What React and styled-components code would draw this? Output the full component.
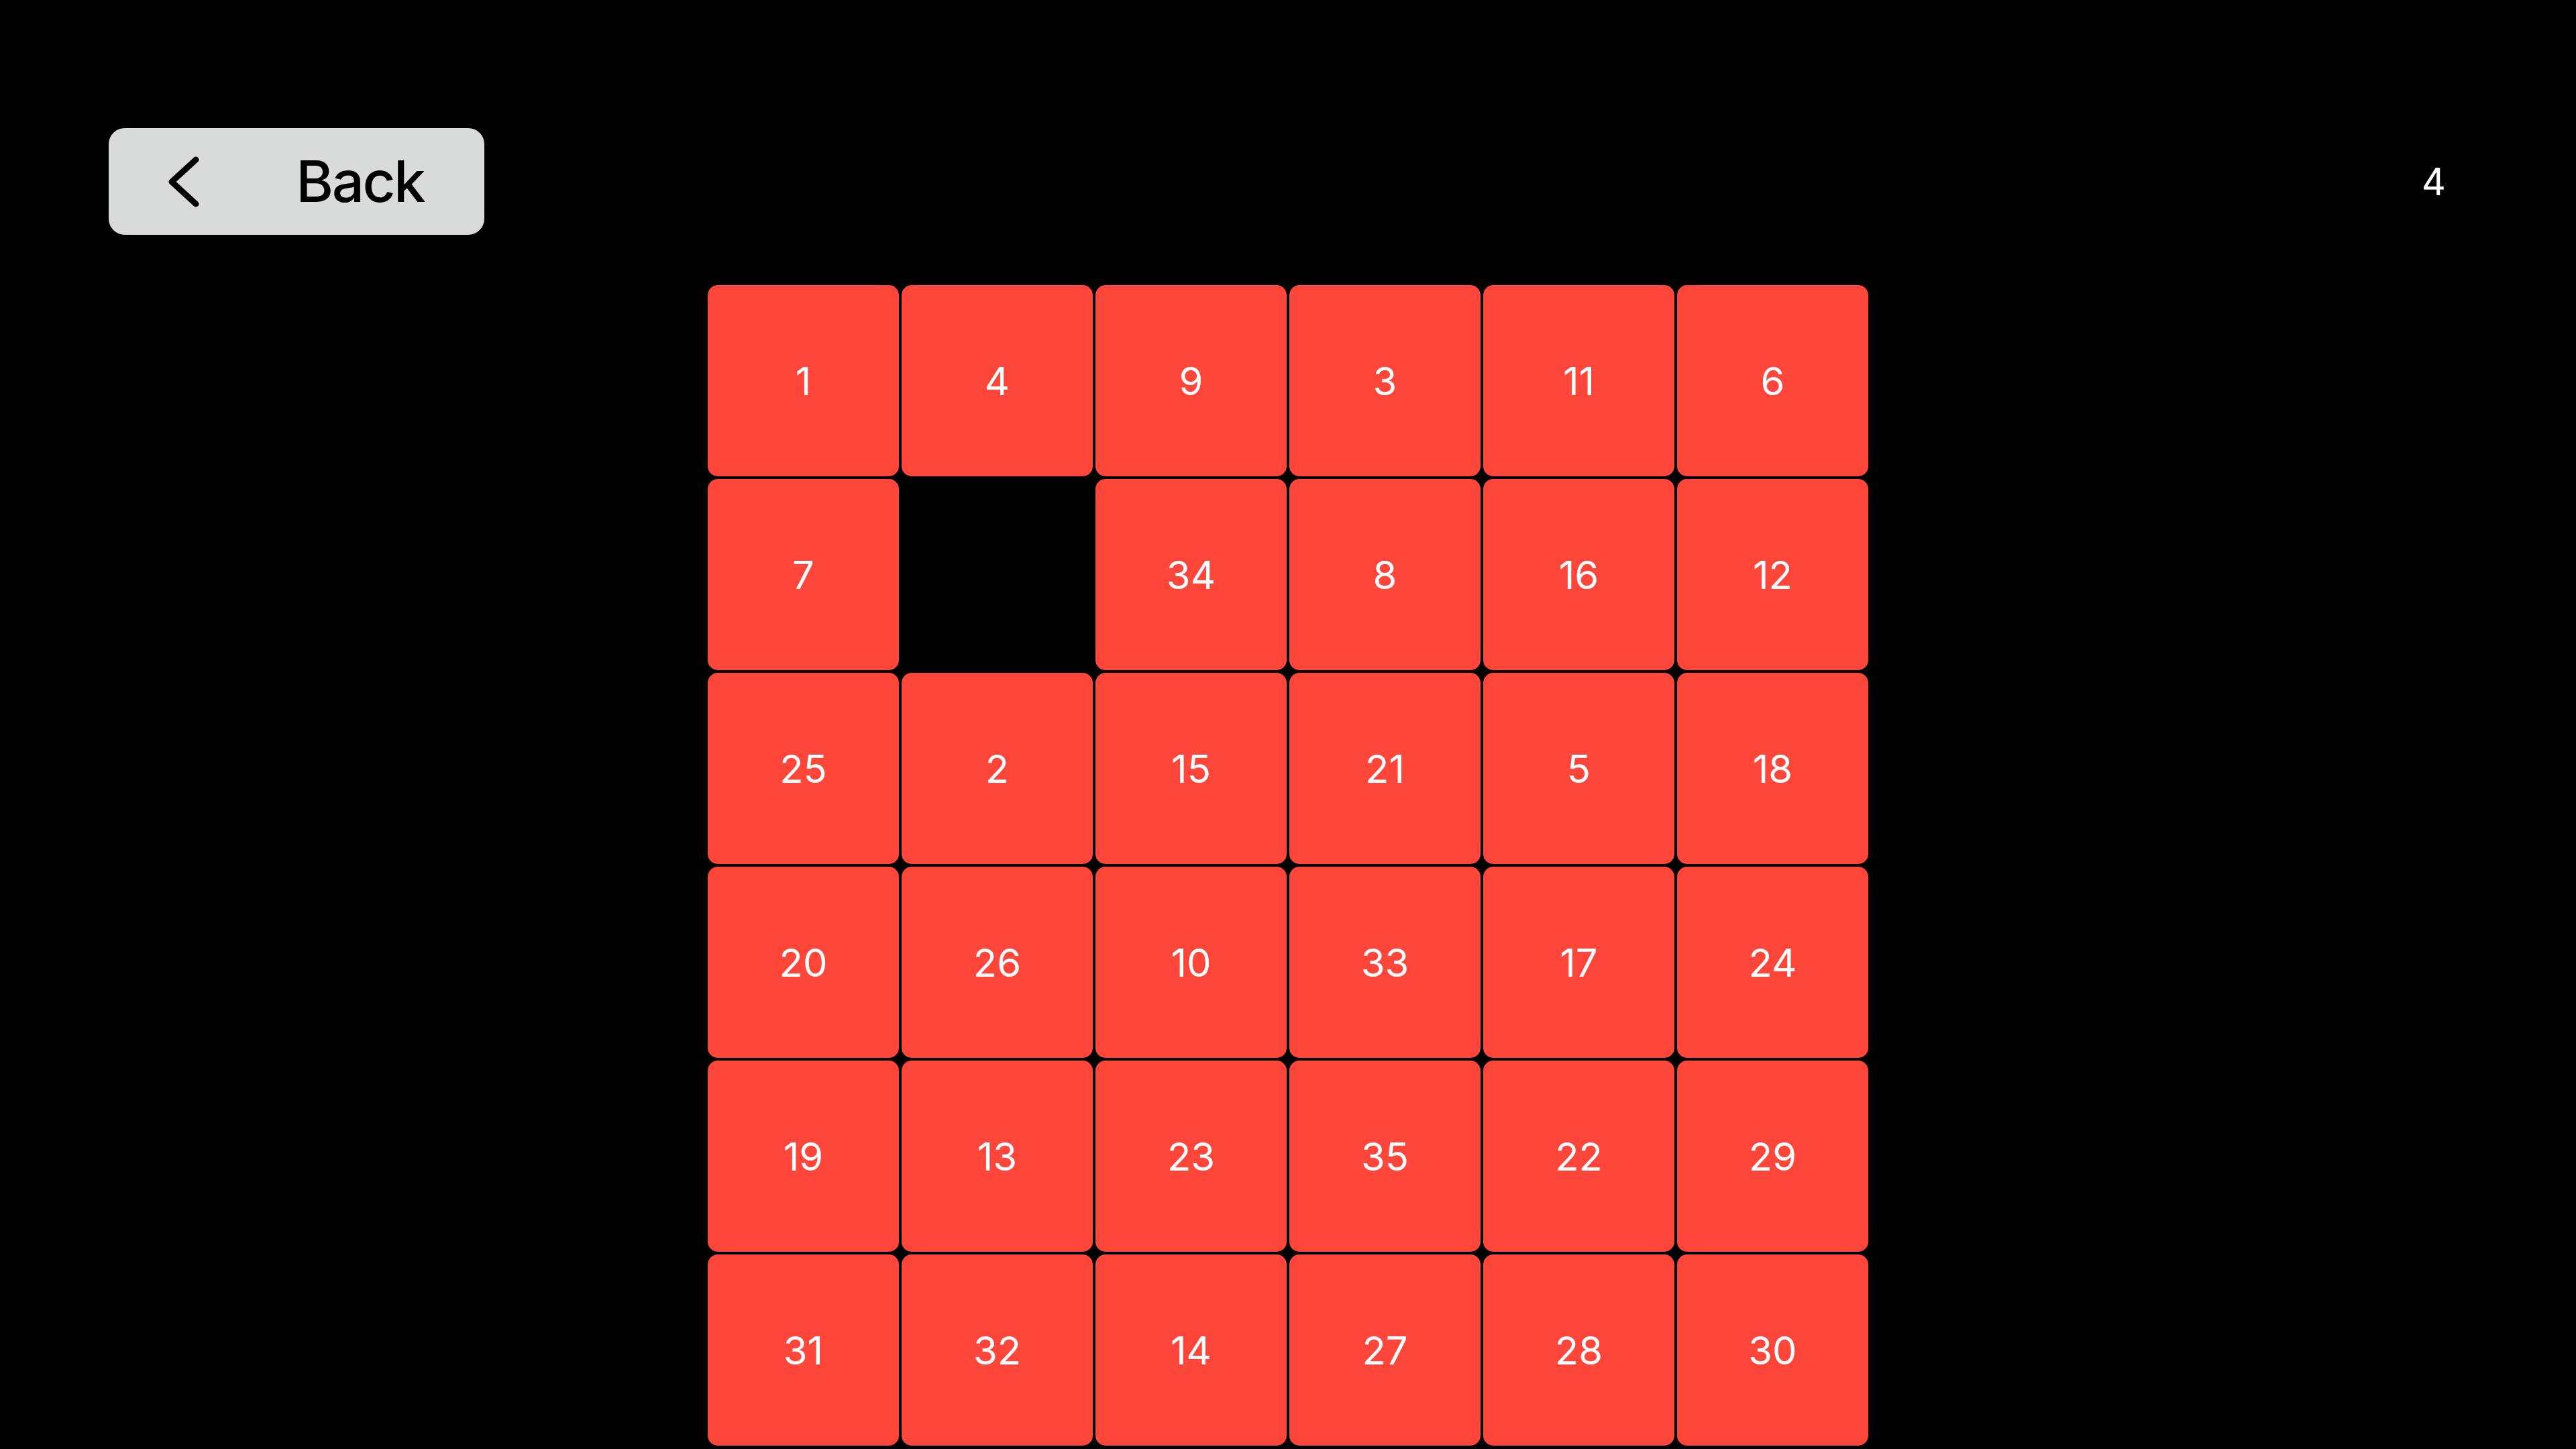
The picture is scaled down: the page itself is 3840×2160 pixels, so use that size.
import React from "react";
import styled, { createGlobalStyle } from "styled-components";

const Global = createGlobalStyle`
  html, body { margin: 0; padding: 0; background: #000; }
  body { width: 3840px; height: 2160px; overflow: hidden; font-family: Inter, "Noto Sans", sans-serif; }
`;

const Page = styled.div`
  width: 3840px;
  height: 2160px;
  box-sizing: border-box;
  padding-top: 191px;
  display: flex;
  flex-direction: column;
  background: #000;
`;

const Header = styled.div`
  display: flex;
  align-items: center;
  justify-content: space-between;
  height: 159px;
  padding: 0 194px 0 162px;
`;

const BackButton = styled.button`
  width: 560px;
  height: 159px;
  box-sizing: border-box;
  padding: 0 90px 0 88px;
  display: flex;
  align-items: center;
  justify-content: space-between;
  background: #d9dbda;
  border: none;
  border-radius: 24px;
  color: #000;
  font-family: Inter, "Noto Sans", sans-serif;
  font-size: 85px;
  font-weight: 500;
  letter-spacing: -2.5px;
  line-height: 1;
`;

const Counter = styled.div`
  color: #fff;
  font-size: 56px;
  font-weight: 400;
  line-height: 1;
`;

const Board = styled.div`
  margin: 75px auto 0;
  display: grid;
  grid-template-columns: repeat(6, 285px);
  grid-auto-rows: 285px;
  gap: 4px;
`;

const Tile = styled.div`
  border-radius: 15px;
  background: ${(p) => (p.$empty ? "transparent" : "#ff463b")};
  color: #fff;
  display: flex;
  align-items: center;
  justify-content: center;
  font-size: 58px;
  font-weight: 400;
  line-height: 1;
`;

const rows = [
  [1, 4, 9, 3, 11, 6],
  [7, null, 34, 8, 16, 12],
  [25, 2, 15, 21, 5, 18],
  [20, 26, 10, 33, 17, 24],
  [19, 13, 23, 35, 22, 29],
  [31, 32, 14, 27, 28, 30],
];

const Chevron = () => (
  <svg width="48" height="76" viewBox="0 0 48 76">
    <polyline
      points="42,5 6,38 42,71"
      fill="none"
      stroke="#000"
      strokeWidth="9"
      strokeLinecap="round"
      strokeLinejoin="round"
    />
  </svg>
);

export default function App() {
  return (
    <>
      <Global />
      <Page>
        <Header>
          <BackButton>
            <Chevron />
            <span>Back</span>
          </BackButton>
          <Counter>4</Counter>
        </Header>
        <Board>
          {rows.flat().map((n, i) => (
            <Tile key={i} $empty={n === null}>
              {n}
            </Tile>
          ))}
        </Board>
      </Page>
    </>
  );
}
